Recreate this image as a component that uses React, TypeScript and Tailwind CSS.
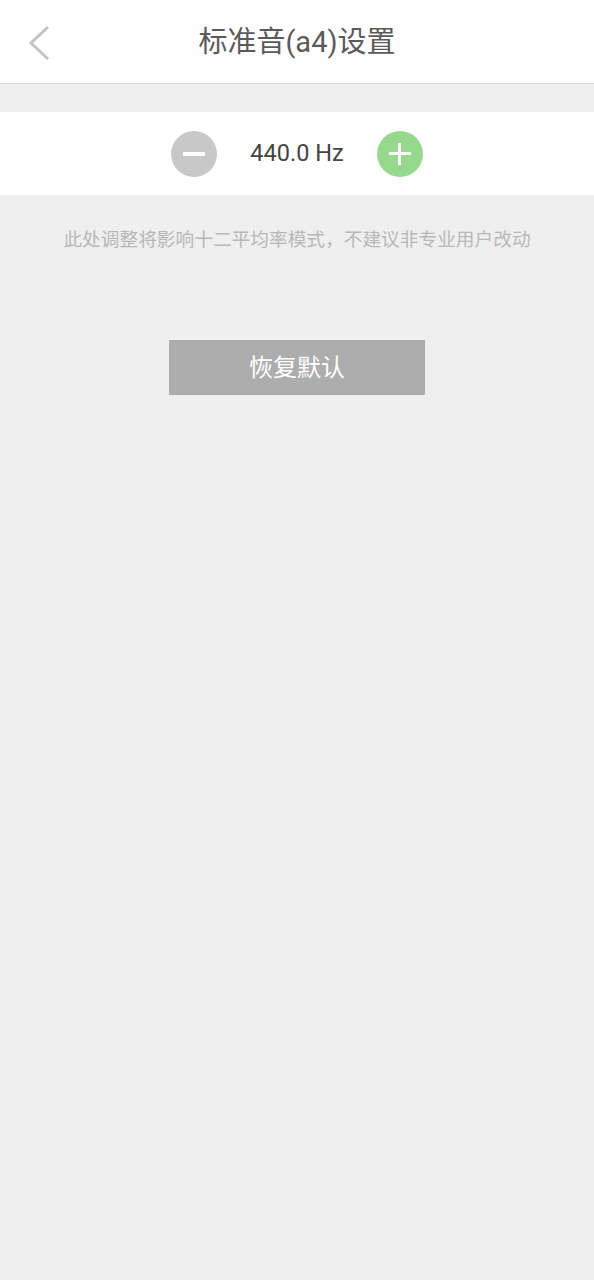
export default function App() {
  return (
    <div
      className="min-h-[1280px] w-full bg-[#efefef]"
      style={{ fontFamily: '"Roboto", "Noto Sans CJK SC", sans-serif' }}
    >
      <div className="relative flex h-[84px] items-center justify-center border-b border-[#dcdcdc] bg-white pt-[3px]">
        <svg
          className="absolute left-[26px] top-[24px]"
          width="26"
          height="38"
          viewBox="0 0 26 38"
          fill="none"
        >
          <path d="M22 3 L5 19 L22 35" stroke="#c4c4c4" strokeWidth="3" />
        </svg>
        <span className="text-[29px] text-[#5a5a5a]">标准音(a4)设置</span>
      </div>

      <div className="mt-[28px] flex h-[83px] items-center justify-center gap-[33px] bg-white">
        <div className="flex h-[46px] w-[46px] items-center justify-center rounded-full bg-[#c8c8c8]">
          <div className="h-[4px] w-[22px] bg-white" />
        </div>
        <span className="text-center text-[23.5px] text-[#444444]">440.0 Hz</span>
        <div className="relative flex h-[46px] w-[46px] items-center justify-center rounded-full bg-[#96d98d]">
          <div className="h-[3px] w-[22px] bg-white" />
          <div className="absolute h-[22px] w-[3px] bg-white" />
        </div>
      </div>

      <p className="mt-[31px] text-center text-[18.7px] text-[#b8b8b8]">
        此处调整将影响十二平均率模式，不建议非专业用户改动
      </p>

      <div className="mt-[86px] flex justify-center">
        <div className="flex h-[55px] w-[256px] items-center justify-center bg-[#adadad] text-[24px] text-white">
          恢复默认
        </div>
      </div>
    </div>
  );
}
